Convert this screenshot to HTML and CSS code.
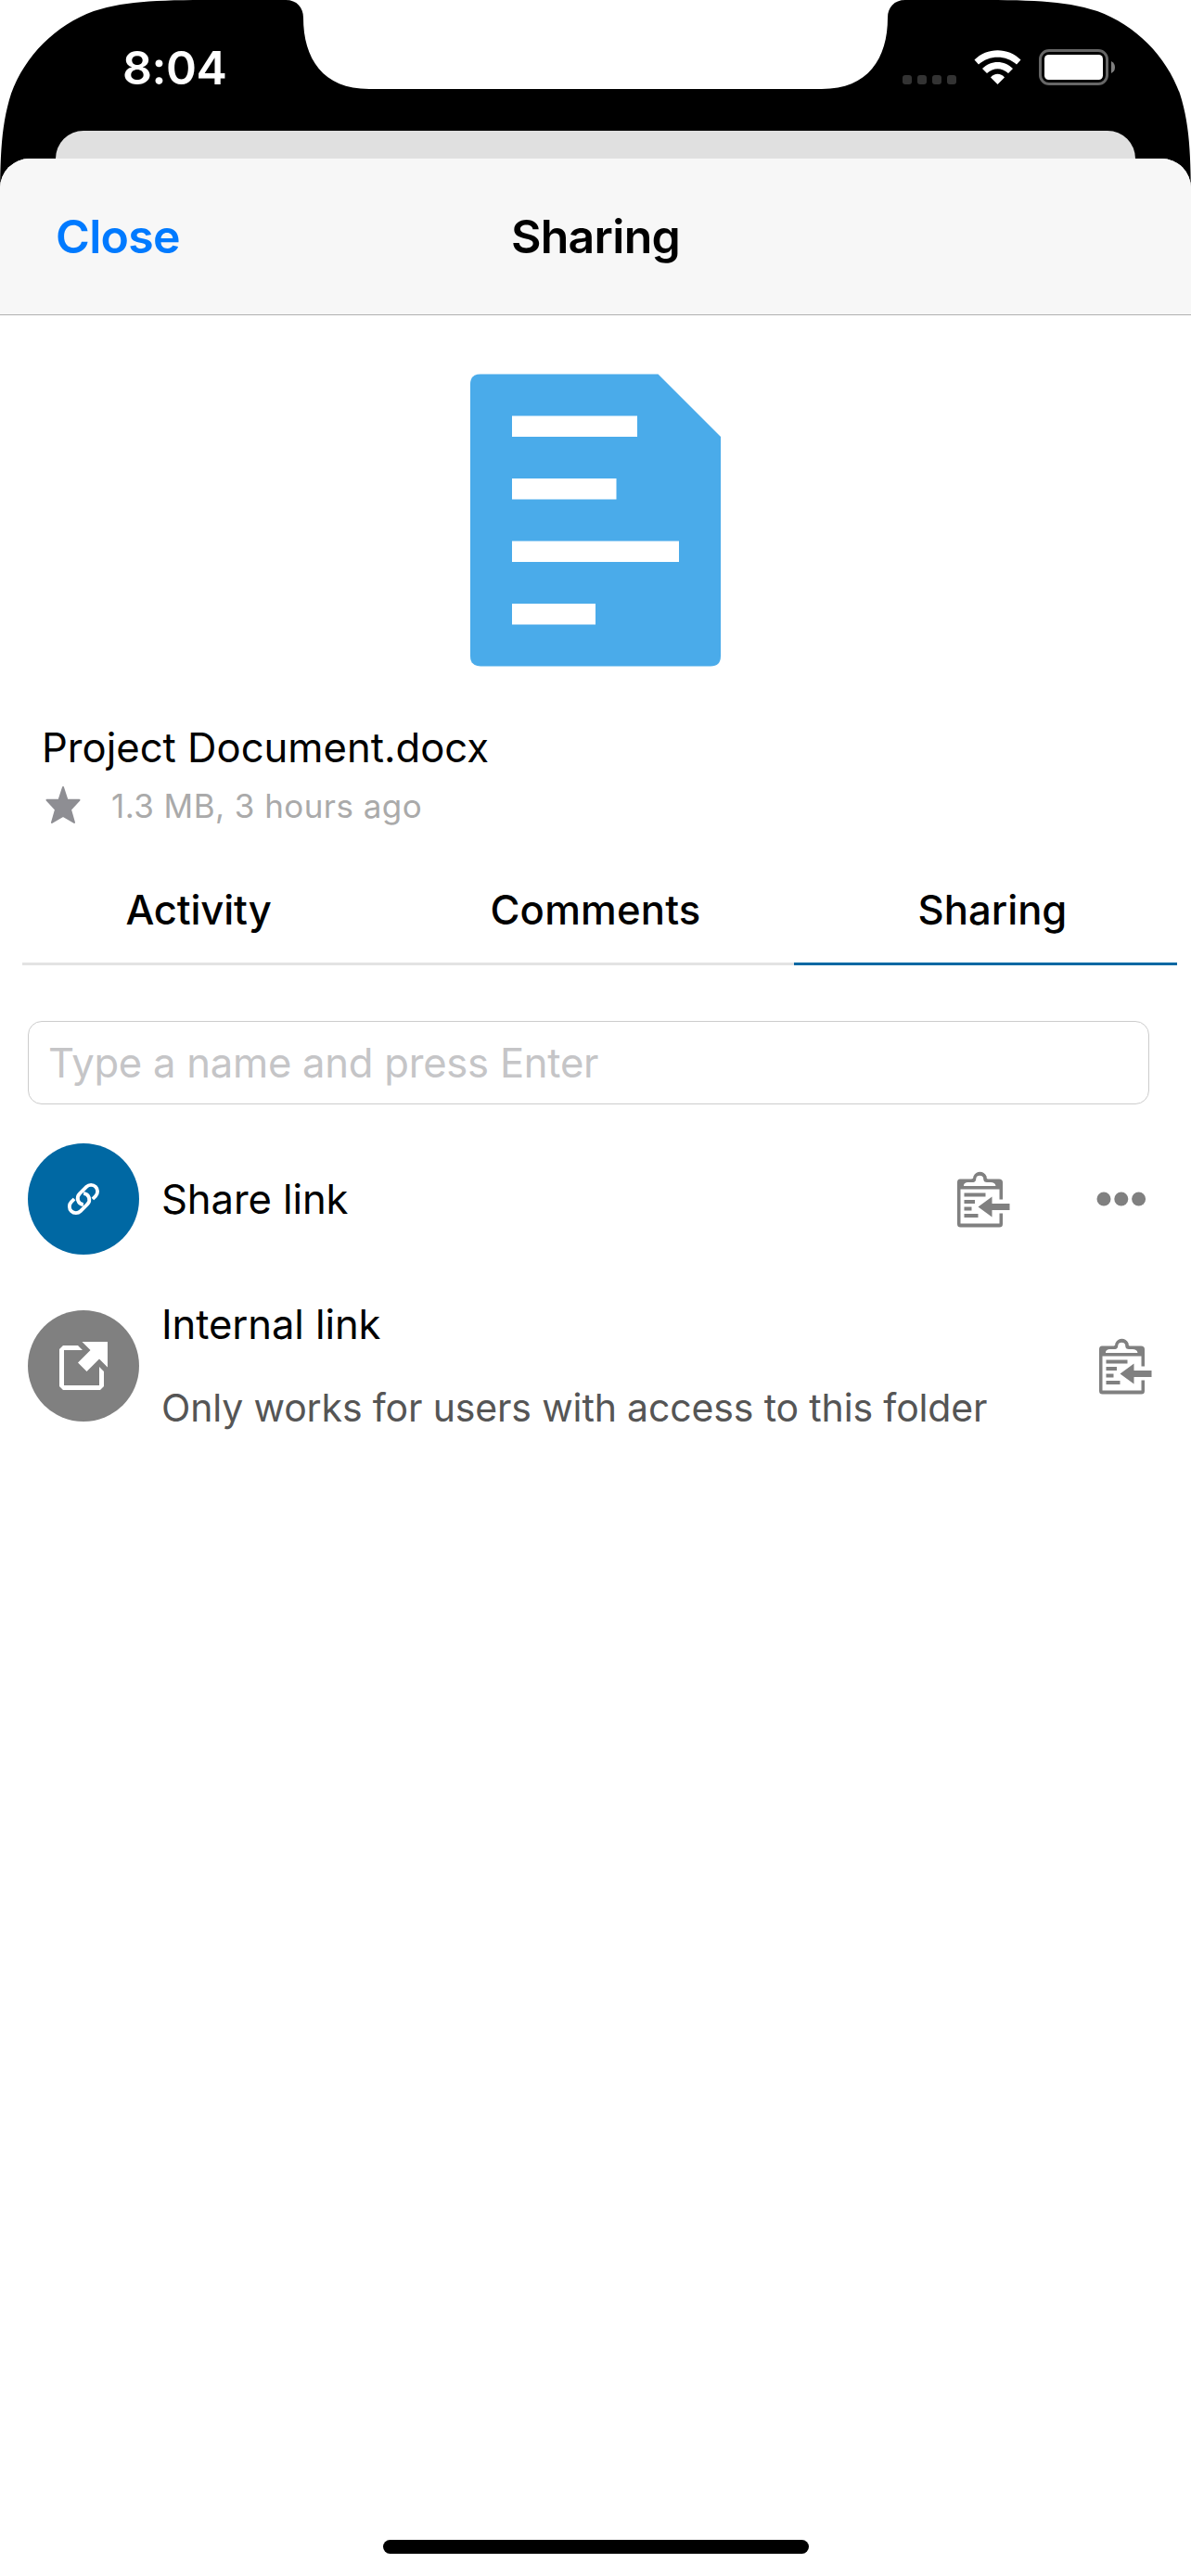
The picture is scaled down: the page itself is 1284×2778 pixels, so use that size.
FILE: index.html
```html
<!DOCTYPE html>
<html lang="en">
<head>
<meta charset="utf-8">
<title>Sharing</title>
<link rel="stylesheet" href="styles.css">
</head>
<body>
<svg class="defs" width="0" height="0" aria-hidden="true">
  <symbol id="clipboard" viewBox="0 0 60 64">
    <path fill-rule="evenodd" d="M5 10.500H17C20 10.500 19 8 19.500 7.500C22 1 31 1 33.500 7.500C34 9 33 10.500 36 10.500H47Q51 10.500 51 14V32.500H47.500V21.500H5.500V58.500H47.500V47.500H51V59Q51 62.500 47.500 62.500H5.500Q2 62.500 2 59V14Q2 10.500 5 10.500ZM9 18H43.500C43 15 41 14 38 14H34C30 14 30.500 11 30 9C29 6 23.500 6 22.500 9C22 12 22 14 18 14H14C11 14 9 15 9 18Z"/>
    <path d="M9.500 25.500H32.500V29.500H9.500ZM9.500 33H21V37H9.500ZM9.500 40.500H17.500V44.500H9.500ZM9.500 48H24.500V52H9.500ZM24.500 40.500L39.500 29.500V37H58.500V44H39.500V51.500Z"/>
  </symbol>
</svg>
<div class="screen">
  <header class="status">
    <svg class="frame" viewBox="0 0 1284 250" aria-hidden="true">
      <path d="M0 245C0 174 0 139 12 101C27 60 60 27 101 12C139 0 174 0 245 0H308C320 0 327 8 327 19C327 63 348 96 398 96H886C936 96 957 63 957 19C957 8 964 0 976 0H1039C1110 0 1145 0 1183 12C1224 27 1257 60 1272 101C1284 139 1284 174 1284 245Z"/>
    </svg>
    <span class="time">8:04</span>
    <svg class="indicators" width="240" height="46" viewBox="0 0 240 46" aria-hidden="true">
      <g fill="#333"><rect x="3" y="31" width="10" height="10" rx="3"/><rect x="19" y="31" width="10" height="10" rx="3"/><rect x="35" y="31" width="10" height="10" rx="3"/><rect x="51" y="31" width="10" height="10" rx="3"/></g>
      <g fill="#fff">
        <path d="M80.500 14.500C94 .700 117 .700 130.500 14.500L126 19.500C114.500 9 96.500 9 85 19.500Z"/>
        <path d="M89 24C98 14.500 113 14.500 122 24L117 29C110 22.500 101 22.500 94 29Z"/>
        <path d="M98 33.500C102 28.500 109 28.500 113 33.500L105.500 41Z"/>
      </g>
      <rect x="151.500" y="4.500" width="72" height="36" rx="9.500" fill="none" stroke="#666" stroke-width="3"/>
      <rect x="156" y="9" width="63" height="27" rx="4.500" fill="#fff"/>
      <path d="M228 16Q232 18 232 22.500T228 29Z" fill="#808080"/>
    </svg>
  </header>
  <div class="behind"></div>
  <main class="sheet">
    <nav class="bar"><span class="close">Close</span><h1 class="title">Sharing</h1><span></span></nav>
    <svg class="document" viewBox="0 -0.4 270 316" aria-hidden="true">
      <path fill="#4aabea" d="M11 0H202.500L270 67.500V304Q270 315 259 315H11Q0 315 0 304V11Q0 0 11 0Z"/>
      <path fill="#fff" d="M45 45H180V67.500H45ZM45 112.500H157.500V135H45ZM45 180H225V202.500H45ZM45 247.500H135V270H45Z"/>
    </svg>
    <section class="file">
      <div class="name"><span class="filename">Project Document.docx</span></div>
      <div class="meta">
        <svg class="star" viewBox="0 0 38 42" aria-hidden="true"><path d="M19 2L23.500 15.800H36.500L27 26L31 40L19 33L7 40L11 26L1.500 15.800H14.500Z"/></svg>
        <span class="details">1.3 MB, 3 hours ago</span>
      </div>
    </section>
    <div class="tabs">
      <div class="tab first"><span>Activity</span></div>
      <div class="tab middle"><span>Comments</span></div>
      <div class="tab active"><span>Sharing</span></div>
    </div>
    <div class="field"><span class="hint">Type a name and press Enter</span></div>
    <div class="row share">
      <div class="badge blue">
        <svg width="44" height="44" viewBox="-22 -22 44 44" fill="none" stroke="#fff" stroke-width="3.800"><g transform="rotate(-45)"><path d="M7 7H11.500A7 7 0 0 0 11.500 -7H1A7 7 0 0 0 -4.500 4.300"/><path d="M-7 -7H-11.500A7 7 0 0 0 -11.500 7H-1A7 7 0 0 0 4.500 -4.300"/></g></svg>
      </div>
      <span class="label">Share link</span>
      <svg class="clip" width="60" height="64"><use href="#clipboard"/></svg>
      <svg class="more" width="54" height="16" viewBox="0 0 54 16"><circle cx="8" cy="8" r="7.500"/><circle cx="26.800" cy="8" r="7.500"/><circle cx="45.600" cy="8" r="7.500"/></svg>
    </div>
    <div class="row internal">
      <div class="badge grey">
        <svg width="56" height="56" viewBox="0 1 56 56" fill="#fff"><path d="M6 7H22L27 12H7V50H45V30L50 35V51L46 55H6L2 51V11Z"/><path d="M26.500 3H54V30.500L45 21.500L31.500 35L22 25.500L35.500 12Z"/></svg>
      </div>
      <div class="texts"><span class="label">Internal link</span><span class="note">Only works for users with access to this folder</span></div>
      <svg class="clip" width="60" height="64"><use href="#clipboard"/></svg>
    </div>
    <div class="home"></div>
  </main>
</div>
</body>
</html>
```
FILE: styles.css
```css
* { box-sizing: border-box; }
body { margin: 0; background: #fff; font-family: Inter, "Liberation Sans", sans-serif; color: #000; }
svg { display: block; flex: none; }
.defs { position: absolute; }
span, h1 { white-space: nowrap; }
.screen { position: relative; width: 1284px; height: 2778px; display: flex; flex-direction: column; overflow: hidden; }
.status { height: 141px; padding: 0 80px 0 132px; display: flex; justify-content: space-between; }
.frame { position: absolute; left: 0; top: 0; width: 1284px; height: 250px; }
.time { position: relative; margin-top: 43px; font-size: 50px; line-height: 60px; font-weight: 600; letter-spacing: -0.5px; color: #fff; }
.indicators { position: relative; margin: 50px -6px 0 0; }
.behind { position: relative; height: 30px; margin: 0 60px; background: #e0e0e0; border-radius: 30px 30px 0 0; }
.sheet { position: relative; flex: 1; display: flex; flex-direction: column; background: #fff; border-radius: 32px 32px 0 0; overflow: hidden; }
.bar { height: 169px; flex: none; display: grid; grid-template-columns: 1fr auto 1fr; align-items: center; padding: 0 60px; background: #f7f7f7; border-bottom: 1px solid #b0b0b0; }
.close, .title { margin: 0; font-size: 50px; line-height: 60px; font-weight: 600; letter-spacing: -0.7px; }
.close { color: #007aff; }
.document { width: 270px; height: 316px; margin: 63px auto 0; }
.file { margin: 58px 45px 0; }
.name { height: 60px; line-height: 60px; font-size: 43.6px; }
.meta { height: 66px; display: flex; align-items: center; color: #aaa; font-size: 35px; letter-spacing: 0.44px; }
.details { margin-bottom: 2px; }
.star { width: 38px; height: 42px; margin: 0 33px 4px 4px; fill: #8e8e93; stroke: #8e8e93; stroke-width: 2; stroke-linejoin: round; }
.tabs { height: 138px; flex: none; display: grid; grid-template-columns: 404px 428px 413px; padding: 0 15px 0 24px; font-size: 43.6px; font-weight: 550; }
.tab { display: flex; justify-content: center; border-bottom: 3px solid #e3e3e3; line-height: 60px; padding-top: 49px; }
.first { padding-right: 24px; letter-spacing: -0.15px; }
.middle { letter-spacing: 0.2px; }
.active { padding-left: 15px; border-color: #0068a3; }
.field { width: 1209px; height: 90px; flex: none; margin: 60px 0 0 30px; border: 1px solid #ccc; border-radius: 15px; padding-left: 21px; font-size: 43.6px; line-height: 90px; letter-spacing: -0.25px; color: #c5c5c7; }
.row { height: 120px; flex: none; display: flex; align-items: center; margin-left: 30px; }
.share { margin-top: 42px; }
.internal { margin-top: 60px; }
.badge { width: 120px; height: 120px; flex: none; border-radius: 50%; display: flex; align-items: center; justify-content: center; }
.blue { background: #0068a3; }
.grey { background: #808080; }
.label { padding-top: 1px; font-size: 43.6px; line-height: 60px; letter-spacing: -0.1px; }
.share .label { margin-left: 24px; }
.clip, .more { fill: #808080; }
.share .clip { margin-left: auto; }
.more { margin: 0 48px 0 92px; }
.texts { display: flex; flex-direction: column; margin-left: 24px; gap: 29px; }
.note { font-size: 41px; line-height: 60px; letter-spacing: -0.15px; color: #555; }
.internal .clip { margin: 0 41px 0 auto; }
.home { width: 459px; height: 15px; margin: auto auto 24px; background: #000; border-radius: 8px; }
```
